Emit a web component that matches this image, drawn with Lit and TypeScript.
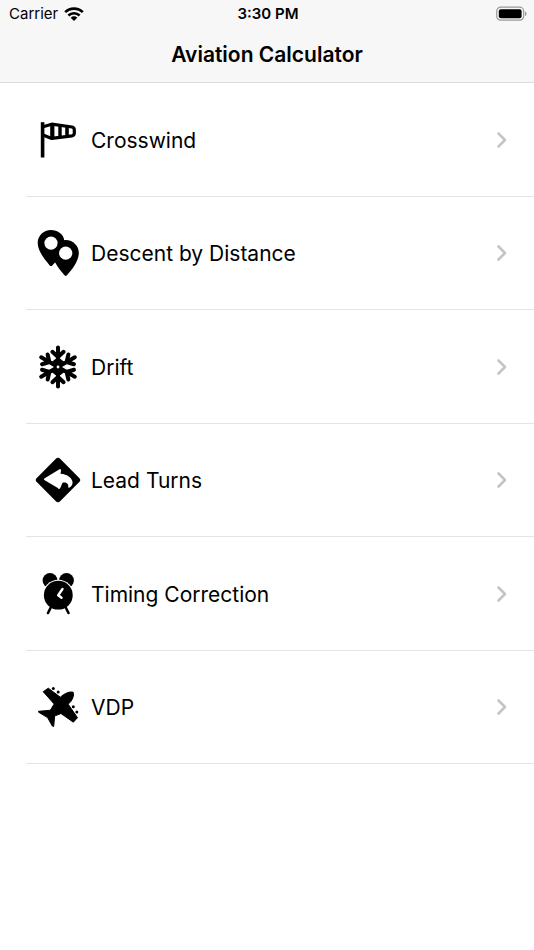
import { LitElement, html, css, svg } from "lit";
import { customElement } from "lit/decorators.js";

const flakeArm = (angle: number) => svg`
  <path transform="rotate(${angle} 24 24)" d="M24 22V4.600M18.400 8.800L24 14L29.600 8.800" />`;

const icons = {
  windsock: svg`
    <path d="M6.800 6.200h3.600v35.300h-3.600z" />
    <path d="M9 10.700L17.700 8.200L38 11Q40.300 11.500 40.300 13.700V17.300Q40.300 19.400 38 19.900L17.700 22.400L9 19"
      fill="none" stroke="#000" stroke-width="3.200" stroke-linejoin="round" />
    <path d="M16.200 8h4.200v14.500h-4.200zM24.300 9h3.400v12.500h-3.400zM31.200 10h3.600v11h-3.600z" />`,
  pins: svg`
    <path d="M17 1C9.500 1 3.700 6.800 3.700 14C3.700 22 10.500 30 15.500 36.200Q17 38 18.500 36.200L21.500 33L30 27L30 10C29 5 23.500 1 17 1Z" />
    <path d="M31.700 11C24.200 11 18.600 17 18.600 24C18.600 32 25.500 40.500 30.500 46.300Q31.700 47.600 32.900 46.300C38 40.500 44.800 32 44.800 24C44.800 17 39.200 11 31.700 11Z" />
    <circle cx="17" cy="14.100" r="6.600" fill="#fff" />
    <circle cx="31.700" cy="24.200" r="6.600" fill="#fff" />`,
  snowflake: svg`
    <g fill="none" stroke="#000" stroke-width="4" stroke-linecap="round" stroke-linejoin="round">
      ${[0, 60, 120, 180, 240, 300].map(flakeArm)}
    </g>
    <path d="M24 14L17 19.500L24 24L17 28.500L24 34L31 28.500L24 24L31 19.500Z" />
    <circle cx="24" cy="24" r="1.400" fill="#fff" />`,
  turn: svg`
    <rect x="7.500" y="7.500" width="33" height="33" rx="3" transform="rotate(45 24 24)" />
    <path fill="#fff" d="M10.300 22.400L25.500 13.200Q27 12.700 27 14.500L26.500 17.800C33.500 18 38.500 22.500 38.600 26.500C38.600 29 37 31 35 31.800Q34 32 34.300 30.500C34.800 27.500 31.500 25.500 28.500 26.800L26.300 32Q25 34 23.800 32L10.300 24Q9.500 23.200 10.300 22.400Z" />`,
  alarm: svg`
    <circle cx="16" cy="10.400" r="7.400" />
    <circle cx="32.500" cy="10.400" r="7.400" />
    <circle cx="24.300" cy="25.200" r="15.500" fill="#fff" />
    <circle cx="24.300" cy="25.200" r="14.400" />
    <path d="M17 37L14 43M31.500 37L34.500 43" fill="none" stroke="#000" stroke-width="2.600" stroke-linecap="round" />
    <path d="M28.500 19L24.200 25.200L27.500 27.700" fill="none" stroke="#fff" stroke-width="2.400" stroke-linecap="round" stroke-linejoin="round" />`,
  plane: svg`
    <path d="M9.200 8.700L14.300 5.200L26.300 14.200C31 10 36 8.200 39.200 9.300C40.300 12.500 38.500 17.500 34.200 21.300L43.500 34.700L39.300 39.200L27 30.500L20.600 33L19.700 43.500L18.300 43L13.600 34.600L4.600 29.200L4.600 28.300L16.300 27.300L20.200 21Z"
      stroke="#000" stroke-linejoin="round" />
    <circle cx="19.300" cy="5.500" r="1.500" />
    <circle cx="24.200" cy="8.900" r="1.500" />
    <circle cx="39.300" cy="23.700" r="1.500" />
    <circle cx="42.800" cy="29" r="1.500" />`,
};

const tools = [
  { label: "Crosswind", icon: icons.windsock, href: "#crosswind" },
  { label: "Descent by Distance", icon: icons.pins, href: "#descent" },
  { label: "Drift", icon: icons.snowflake, href: "#drift" },
  { label: "Lead Turns", icon: icons.turn, href: "#lead-turns" },
  { label: "Timing Correction", icon: icons.alarm, href: "#timing" },
  { label: "VDP", icon: icons.plane, href: "#vdp" },
];

@customElement("app-root")
export class AppRoot extends LitElement {
  static styles = css`
    :host {
      display: block;
      min-height: 100vh;
      background: #fff;
      color: #000;
      font-family: Inter, "Liberation Sans", sans-serif;
    }
    svg {
      display: block;
    }
    .top {
      background: #f7f7f7;
      border-bottom: 1px solid #dcdcdc;
    }
    .status {
      display: grid;
      grid-template-columns: 1fr auto 1fr;
      align-items: center;
      height: 28px;
      padding: 0 7px 0 9px;
      font-size: 15px;
      line-height: 20px;
    }
    .carrier {
      display: flex;
      align-items: center;
      gap: 6px;
    }
    .time {
      font-weight: 600;
    }
    .battery {
      justify-self: end;
    }
    .title {
      margin: 0;
      padding: 13px 0;
      font-size: 21px;
      line-height: 28px;
      font-weight: 600;
      text-align: center;
    }
    .list {
      list-style: none;
      margin: 0;
      padding: 0 0 0 26px;
    }
    .item {
      box-sizing: border-box;
      display: flex;
      height: 114px;
      border-bottom: 1px solid #e4e4e4;
    }
    .item:nth-child(even) {
      height: 113px;
    }
    .link {
      flex: 1;
      display: flex;
      align-items: center;
      gap: 9px;
      padding: 0 26px 0 8px;
      color: inherit;
      text-decoration: none;
      font-size: 21px;
      line-height: 28px;
    }
    .label {
      flex: 1;
      padding-top: 2px;
    }
  `;

  render() {
    return html`
      <header class="top">
        <div class="status">
          <span class="carrier">
            Carrier
            <svg width="20" height="14" viewBox="0 0 20 14" aria-label="Wi-Fi">
              <g fill="none" stroke="#000" stroke-width="2.600">
                <path d="M1.200 5.200A12.500 12.500 0 0 1 18.800 5.200" />
                <path d="M4.400 8.500A8 8 0 0 1 15.600 8.500" />
              </g>
              <path d="M6.700 10.700A4.700 4.700 0 0 1 13.300 10.700L10 14Z" />
            </svg>
          </span>
          <span class="time">3:30 PM</span>
          <svg class="battery" width="32" height="16" viewBox="0 0 32 16" aria-label="Battery full">
            <rect x="1.700" y="1.200" width="27" height="13" rx="4" fill="none" stroke="#999" stroke-width="1.200" />
            <rect x="3.800" y="3.300" width="22.800" height="9" rx="2" />
            <path d="M30 5.500Q31.600 6 31.600 7.700T30 9.900Z" fill="#999" />
          </svg>
        </div>
        <h1 class="title">Aviation Calculator</h1>
      </header>
      <ul class="list">
        ${tools.map(
          (tool) => html`
            <li class="item">
              <a class="link" href=${tool.href}>
                <svg width="48" height="48" viewBox="0 0 48 48" aria-hidden="true">${tool.icon}</svg>
                <span class="label">${tool.label}</span>
                <svg width="12" height="18" viewBox="0 0 12 18" aria-hidden="true">
                  <path d="M2.500 2.500L9 9L2.500 15.500" fill="none" stroke="#c4c4c7" stroke-width="2.600" stroke-linecap="round" stroke-linejoin="round" />
                </svg>
              </a>
            </li>
          `
        )}
      </ul>
    `;
  }
}
